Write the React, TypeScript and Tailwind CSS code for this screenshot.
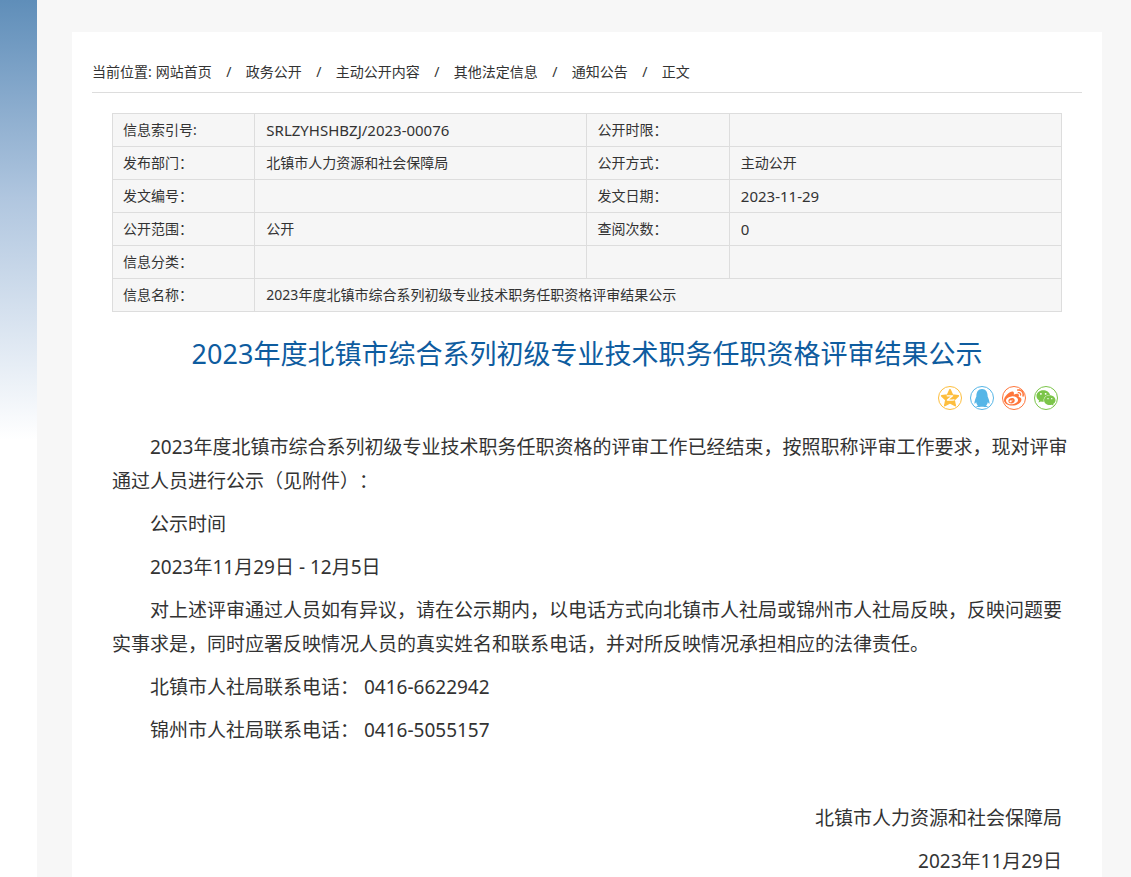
import type { ReactNode } from "react";
import { FaQq, FaWeibo, FaWeixin } from "react-icons/fa";

const crumbs = ["网站首页", "政务公开", "主动公开内容", "其他法定信息", "通知公告"];

const rows: [string, string, string, string][] = [
  ["信息索引号:", "SRLZYHSHBZJ/2023-00076", "公开时限：", ""],
  ["发布部门：", "北镇市人力资源和社会保障局", "公开方式：", "主动公开"],
  ["发文编号：", "", "发文日期：", "2023-11-29"],
  ["公开范围：", "公开", "查阅次数：", "0"],
  ["信息分类：", "", "", ""],
];

const title = "2023年度北镇市综合系列初级专业技术职务任职资格评审结果公示";

function QzoneIcon() {
  return (
    <svg viewBox="0 0 20 20" className="size-5" aria-hidden="true">
      <path
        fill="currentColor"
        stroke="currentColor"
        strokeLinejoin="round"
        strokeWidth="1.6"
        d="M10 1.700l2.500 5.300 5.800.8-4.200 4 1.100 5.800-5.200-2.800-5.200 2.800 1.100-5.800-4.200-4 5.800-.8z"
      />
      <path
        fill="none"
        stroke="#fff"
        strokeLinecap="round"
        strokeLinejoin="round"
        strokeWidth="1.3"
        d="M7.200 7.800h5.400l-5.200 4.200c2.200.3 4.600.3 6.600-.2"
      />
    </svg>
  );
}

function Share({ label, className, children }: { label: string; className: string; children: ReactNode }) {
  return (
    <a
      href="#"
      aria-label={label}
      className={`flex size-6 items-center justify-center rounded-full border ${className}`}
    >
      {children}
    </a>
  );
}

function Cell({ children, span }: { children?: string; span?: number }) {
  const latin = !!children && /^[\x20-\x7e]+$/.test(children);
  return (
    <td
      colSpan={span}
      className={`h-[33px] border border-[#ddd] px-[11px] py-0 ${latin ? "text-[15px] leading-5" : ""}`}
    >
      {children}
    </td>
  );
}

function Head({ children }: { children?: ReactNode }) {
  return (
    <th scope="row" className="h-[33px] border border-[#ddd] px-[10px] py-0 text-left font-normal">
      {children}
    </th>
  );
}

export default function App() {
  return (
    <div className="flex min-h-screen bg-white font-['Noto_Sans','Noto_Sans_CJK_SC',sans-serif] text-[#333] [text-spacing-trim:space-all]">
      <div className="h-[440px] w-[37px] shrink-0 bg-linear-to-b from-[#5f8eb9] via-[#b0c6df] via-45% to-white" />
      <div className="flex-1 bg-[#f7f7f7] pt-8 pr-[29px] pl-[35px]">
        <main className="min-h-full bg-white px-5 pt-5">
          <nav
            aria-label="当前位置"
            className="flex h-[41px] items-center border-b border-[#ddd] text-sm whitespace-nowrap"
          >
            <span className="mr-1">当前位置:</span>
            {crumbs.map((name) => (
              <span key={name} className="flex">
                <a href="#">{name}</a>
                <span className="w-[34px] text-center">/</span>
              </span>
            ))}
            <span>正文</span>
          </nav>

          <article className="px-5 pt-5">
            <table className="w-full table-fixed border-collapse bg-[#f6f6f6] text-sm">
              <colgroup>
                <col className="w-[15%]" />
                <col className="w-[35%]" />
                <col className="w-[15%]" />
                <col className="w-[35%]" />
              </colgroup>
              <tbody>
                {rows.map(([a, b, c, d]) => (
                  <tr key={a}>
                    <Head>{a}</Head>
                    <Cell>{b}</Cell>
                    {c ? <Head>{c}</Head> : <Cell />}
                    <Cell>{d}</Cell>
                  </tr>
                ))}
                <tr>
                  <Head>信息名称：</Head>
                  <Cell span={3}>{title}</Cell>
                </tr>
              </tbody>
            </table>

            <h1 className="mt-5 text-center text-[27px] leading-[44px] text-[#0e5c9f]">{title}</h1>

            <div className="mt-[10px] flex justify-end gap-2 pr-1">
              <Share label="QQ空间" className="border-[#fdbe3d] text-[#fdbe3d]">
                <QzoneIcon />
              </Share>
              <Share label="QQ" className="border-[#56b6e7] text-[#56b6e7]">
                <FaQq className="size-[18px]" />
              </Share>
              <Share label="微博" className="border-[#ff763b] text-[#ff763b]">
                <FaWeibo className="size-5" />
              </Share>
              <Share label="微信" className="border-[#7bc549] text-[#7bc549]">
                <FaWeixin className="size-5" />
              </Share>
            </div>

            <div className="mt-5 -mr-2 space-y-[9px] text-[19px] leading-[34px]">
              <p className="indent-[38px]">
                2023年度北镇市综合系列初级专业技术职务任职资格的评审工作已经结束，按照职称评审工作要求，现对评审通过人员进行公示（见附件）：
              </p>
              <p className="indent-[38px]">公示时间</p>
              <p className="indent-[38px]">2023年11月29日 - 12月5日</p>
              <p className="indent-[38px]">
                对上述评审通过人员如有异议，请在公示期内，以电话方式向北镇市人社局或锦州市人社局反映，反映问题要实事求是，同时应署反映情况人员的真实姓名和联系电话，并对所反映情况承担相应的法律责任。
              </p>
              <p className="indent-[38px]">北镇市人社局联系电话： 0416-6622942</p>
              <p className="indent-[38px]">锦州市人社局联系电话： 0416-5055157</p>
            </div>
            <div className="mt-[54px] space-y-[9px] text-right text-[19px] leading-[34px]">
              <p>北镇市人力资源和社会保障局</p>
              <p>2023年11月29日</p>
            </div>
          </article>
        </main>
      </div>
    </div>
  );
}
